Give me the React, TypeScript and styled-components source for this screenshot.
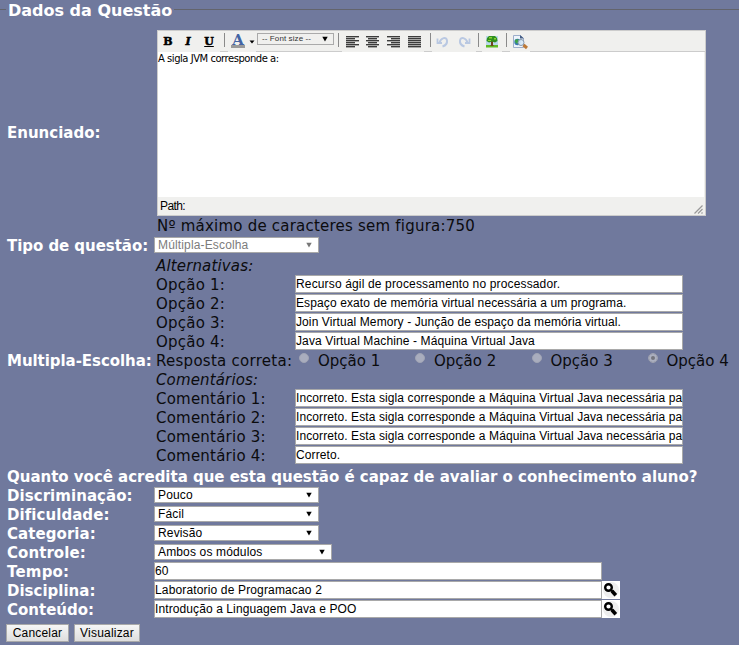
import React from 'react';
import styled, { createGlobalStyle, css } from 'styled-components';

const Global = createGlobalStyle`
  * { box-sizing: border-box; }
  body { margin: 0; background: #70799d; overflow: hidden; }
`;

const Page = styled.main`
  width: 739px;
  height: 645px;
  background: #70799d;
  color: #0b0b0d;
  font: 15px/21px 'DejaVu Sans', sans-serif;
  overflow: hidden;
`;

const Legend = styled.header`
  display: flex;
  height: 30px;
  align-items: flex-start;
`;

const Rule = styled.span<{ $width?: number }>`
  height: 1px;
  margin-top: 9px;
  background: #63646c;
  ${p => (p.$width ? css`width: ${p.$width}px;` : css`flex: 1;`)}
`;

const Title = styled.h1`
  margin: 0;
  width: 168px;
  padding-left: 2px;
  color: #fff;
  font: bold 16px/21px 'DejaVu Sans', sans-serif;
  white-space: nowrap;
`;

const Row = styled.div<{ $height?: number }>`
  display: grid;
  grid-template-columns: 147px 1fr;
  grid-template-rows: 100%;
  align-items: center;
  height: ${p => p.$height ?? 19}px;
  padding-left: 7px;
`;

const Label = styled.span<{ $track?: number }>`
  height: 19px;
  color: #fff;
  font-weight: bold;
  letter-spacing: ${p => p.$track ?? 0}px;
  white-space: nowrap;
`;

const Text = styled.span<{ $track?: number; $italic?: boolean }>`
  height: 19px;
  letter-spacing: ${p => p.$track ?? 0.22}px;
  font-style: ${p => (p.$italic ? 'italic' : 'normal')};
  white-space: nowrap;
`;

const Question = styled.div`
  height: 19px;
  margin-top: 2px;
  padding-left: 7px;
`;

const EditorCell = styled.div`
  align-self: start;
  padding-left: 3px;
`;

const Editor = styled.section`
  display: flex;
  flex-direction: column;
  width: 549px;
  height: 186px;
  border: 1px solid #ccc;
  background: #f0f0ee;
`;

const Toolbar = styled.div`
  display: flex;
  height: 21px;
  box-shadow: inset 0 -1px #ccc;
`;

const Tool = styled.span<{ $width?: number }>`
  display: block;
  width: ${p => p.$width ?? 20}px;
  height: 21px;
  background: #f0f0ee;
  svg { display: block; }
`;

const Divider = styled.span<{ $before: number; $after: number }>`
  width: 1px;
  height: 14px;
  margin: 2px ${p => p.$after}px 0 ${p => p.$before}px;
  background: #8a8a8a;
`;

const Glyph = styled.b<{ $italic?: boolean; $underline?: boolean }>`
  display: block;
  color: #000;
  text-align: center;
  font: bold 11px/22px 'DejaVu Serif', serif;
  font-style: ${p => (p.$italic ? 'italic' : 'normal')};
  text-decoration: ${p => (p.$underline ? 'underline' : 'none')};
  -webkit-text-stroke: 0.5px #000;
`;

const SizeSelect = styled.div`
  display: flex;
  justify-content: space-between;
  width: 77px;
  height: 12px;
  margin: 2px 4px 0 1px;
  padding: 0 5px 0 4px;
  border: 1px solid #aaa;
  font: 8px/10px 'Liberation Sans', sans-serif;
  letter-spacing: 0.1px;
  color: #333;
  svg { margin-top: 2px; }
`;

const Area = styled.div`
  flex: 1;
  width: 546px;
  background: #fff;
  color: #000;
  font: 10px/13px 'DejaVu Sans', sans-serif;
  letter-spacing: -0.47px;
`;

const Status = styled.div`
  display: flex;
  justify-content: space-between;
  align-items: flex-end;
  height: 18px;
  padding-left: 2px;
  color: #000;
  font: 12px/17px 'Liberation Sans', sans-serif;
  letter-spacing: -0.6px;
`;

const SelectBox = styled.div<{ $width?: number; $disabled?: boolean }>`
  display: flex;
  align-items: center;
  justify-content: space-between;
  width: ${p => p.$width ?? 165}px;
  height: 16px;
  margin-top: -1px;
  padding: 0 6px 0 3px;
  border: 1px solid #a9a9a9;
  background: #fff;
  color: ${p => (p.$disabled ? '#7c7c7c' : '#000')};
  font: 12px/14px 'Liberation Sans', sans-serif;
  letter-spacing: 0.15px;
`;

const InputBox = styled.div<{ $width: number; $track?: number }>`
  width: ${p => p.$width}px;
  height: 18px;
  border: 1px solid #a9a9a9;
  background: #fff;
  color: #000;
  font: 12px/16px 'Liberation Sans', sans-serif;
  letter-spacing: ${p => p.$track ?? 0}px;
  white-space: nowrap;
`;

const InputLine = styled.div`
  display: flex;
  height: 19px;
`;

const SubForm = styled.div`
  padding-left: 2px;
`;

const SubRow = styled.div`
  display: grid;
  grid-template-columns: 139px 1fr;
  height: 19px;
`;

const Choices = styled.div`
  display: flex;
`;

const Choice = styled.span<{ $width: number }>`
  display: flex;
  width: ${p => p.$width}px;
`;

const Radio = styled.i<{ $checked: boolean }>`
  flex: none;
  width: 10px;
  height: 10px;
  margin: 2px 9px 0 4px;
  border-radius: 50%;
  border: 1px solid #a0a4b4;
  background: ${p => (p.$checked ? '#74757d' : '#a9adbe')};
  box-shadow: ${p => (p.$checked ? 'inset 0 0 0 2px #acb0c0' : 'none')};
`;

const Search = styled.span`
  width: 18px;
  height: 18px;
  background: #fff;
  svg { display: block; }
`;

const Actions = styled.footer`
  display: flex;
  gap: 5px;
  padding: 5px 0 0 6px;
`;

const Button = styled.button<{ $width: number }>`
  width: ${p => p.$width}px;
  height: 18px;
  padding: 0;
  border: 1px solid #a9a9a9;
  background: linear-gradient(#f6f6f6, #dedede);
  color: #000;
  font: 12px/16px 'Liberation Sans', sans-serif;
  letter-spacing: 0.2px;
`;

const Arrow = ({ color = '#000', size = 6 }: { color?: string; size?: number }) => (
  <svg width={size} height={size} viewBox="0 0 6 6"><path d="M.3 .8h5.4L3 5.500z" fill={color} /></svg>
);

const Align = ({ kind }: { kind: 'left' | 'center' | 'right' | 'full' }) => (
  <svg width="20" height="21">
    {[5, 7, 9, 11, 13, 15].map((y, i) => {
      const w = kind === 'full' || i % 2 === 0 ? 13 : 9;
      const x = kind === 'right' ? 17 - w : kind === 'center' ? 4 + (13 - w) / 2 : 4;
      return <rect key={y} x={x} y={y} width={w} height="1.400" fill="#3c3c3c" />;
    })}
  </svg>
);

const Curl = ({ flip }: { flip?: boolean }) => (
  <svg width="22" height="21" viewBox="0 0 22 21">
    <g transform={flip ? 'translate(21 0) scale(-1 1)' : undefined} fill="none" stroke="#b9c8e2" strokeWidth="2">
      <path d="M7.500 11.500C9 6.500 14.500 5.500 15 9.500c.4 3-1.500 5-4.500 6" />
      <path d="M5.500 7.500v4.500h4.500" strokeWidth="1.800" />
    </g>
  </svg>
);

const Tree = () => (
  <svg width="20" height="21" viewBox="0 0 20 21">
    <rect x="4" y="5" width="12" height="11" fill="#b9d8e9" />
    <path d="M4 14h12v2.500H4z" fill="#5fba25" />
    <path d="M9 10h2v4l1 1H8l1-1z" fill="#70441c" />
    <path d="M4.500 10l.5-3 2-2h6l2 2 .5 3-2.500 1.500-3-1-3 1z" fill="#2f8f1e" />
    <path d="M7 6h3v1.500H7zM12 7h2v1.500h-2zM6 9h3v1H6z" fill="#8ad330" />
  </svg>
);

const Preview = () => (
  <svg width="20" height="21" viewBox="0 0 20 21">
    <path d="M3.500 4.500h7l3 3v9h-10z" fill="#edf4fc" stroke="#9cadcb" />
    <path d="M10 4v3.500h4z" fill="#455d84" />
    <circle cx="7.500" cy="11" r="3.200" fill="#3978b5" />
    <path d="M5 9l3-1 1 2-2 3-2-2z" fill="#3ca449" />
    <circle cx="11" cy="11.500" r="3" fill="#d5eaf9" fillOpacity=".9" stroke="#8798ad" />
    <path d="M13.500 14l3.500 3" stroke="#bd7936" strokeWidth="3" />
  </svg>
);

const TextColor = () => (
  <svg width="29" height="21" viewBox="0 0 29 21">
    <text x="10" y="14" textAnchor="middle" fontFamily="DejaVu Serif, serif" fontWeight="bold" fontSize="15" fill="#4364a4">A</text>
    <rect x="3" y="14" width="14" height="3" fill="#999" />
    <path d="M21.500 9.500h5L24 12.500z" fill="#000" />
  </svg>
);

const Lens = () => (
  <svg width="18" height="18" viewBox="0 0 18 18">
    <circle cx="9" cy="9" r="8" fill="#eee" />
    <circle cx="6.500" cy="6.500" r="3.300" fill="#fff" stroke="#000" strokeWidth="2.400" />
    <path d="M8.800 8.800l2 2" stroke="#000" strokeWidth="2.200" />
    <path d="M10 10l3.800 4.300" stroke="#000" strokeWidth="3.600" />
  </svg>
);

const Grip = () => (
  <svg width="12" height="12" viewBox="0 0 12 12">
    <path d="M1.500 10.500l8-8M5 10.500l4.500-4.500M8.500 10.500l1-1" stroke="#999" fill="none" strokeWidth="1.200" />
  </svg>
);

const options = [
  { text: 'Recurso ágil de processamento no processador.', track: 0.15 },
  { text: 'Espaço exato de memória virtual necessária a um programa.', track: 0.11 },
  { text: 'Join Virtual Memory - Junção de espaço da memória virtual.', track: 0.1 },
  { text: 'Java Virtual Machine - Máquina Virtual Java', track: 0.12 },
];
const wrong = 'Incorreto. Esta sigla corresponde a Máquina Virtual Java necessária pa';
const comments = [wrong, wrong, wrong, 'Correto.'];
const choiceWidths = [116, 116.5, 116, 90];
const selects = [
  { label: 'Discriminação:', value: 'Pouco', width: 165 },
  { label: 'Dificuldade:', value: 'Fácil', width: 165 },
  { label: 'Categoria:', value: 'Revisão', width: 165 },
  { label: 'Controle:', value: 'Ambos os módulos', width: 178 },
];

export default function App() {
  return (
    <Page>
      <Global />
      <Legend><Rule $width={6} /><Title>Dados da Questão</Title><Rule /></Legend>
      <Row $height={205}>
        <Label>Enunciado:</Label>
        <EditorCell>
          <Editor>
            <Toolbar>
              <Tool><Glyph>B</Glyph></Tool>
              <Tool><Glyph $italic>I</Glyph></Tool>
              <Tool $width={22}><Glyph $underline>U</Glyph></Tool>
              <Divider $before={4} $after={3} />
              <Tool $width={28}><TextColor /></Tool>
              <SizeSelect>-- Font size --<Arrow /></SizeSelect>
              <Divider $before={0} $after={3} />
              <Tool><Align kind="left" /></Tool>
              <Tool $width={21}><Align kind="center" /></Tool>
              <Tool $width={21}><Align kind="right" /></Tool>
              <Tool><Align kind="full" /></Tool>
              <Divider $before={6} $after={1} />
              <Tool $width={22}><Curl /></Tool>
              <Tool $width={22}><Curl flip /></Tool>
              <Divider $before={2} $after={3} />
              <Tool><Tree /></Tool>
              <Divider $before={4} $after={3} />
              <Tool><Preview /></Tool>
            </Toolbar>
            <Area>A sigla JVM corresponde a:</Area>
            <Status>Path:<Grip /></Status>
          </Editor>
          <Text>Nº máximo de caracteres sem figura:750</Text>
        </EditorCell>
      </Row>
      <Row $height={21}>
        <Label $track={-0.05}>Tipo de questão:</Label>
        <SelectBox $disabled>Múltipla-Escolha<Arrow color="#777" /></SelectBox>
      </Row>
      <Row $height={209}>
        <Label $track={-0.05}>Multipla-Escolha:</Label>
        <SubForm>
          <Text as="div" $italic $track={0.15}>Alternativas:</Text>
          {options.map((o, i) => (
            <SubRow key={o.text}>
              <Text>Opção {i + 1}:</Text>
              <InputBox $width={388} $track={o.track}>{o.text}</InputBox>
            </SubRow>
          ))}
          <SubRow>
            <Text $track={0.27}>Resposta correta:</Text>
            <Choices>
              {choiceWidths.map((w, i) => (
                <Choice key={i} $width={w}><Radio $checked={i === 3} /><Text $track={0}>Opção {i + 1}</Text></Choice>
              ))}
            </Choices>
          </SubRow>
          <Text as="div" $italic $track={0.15}>Comentários:</Text>
          {comments.map((c, i) => (
            <SubRow key={i}>
              <Text>Comentário {i + 1}:</Text>
              <InputBox $width={388} $track={0.1}>{c}</InputBox>
            </SubRow>
          ))}
        </SubForm>
      </Row>
      <Question><Label $track={-0.015}>Quanto você acredita que esta questão é capaz de avaliar o conhecimento aluno?</Label></Question>
      {selects.map(s => (
        <Row key={s.label}>
          <Label $track={0.06}>{s.label}</Label>
          <SelectBox $width={s.width}>{s.value}<Arrow /></SelectBox>
        </Row>
      ))}
      <Row><Label $track={0.2}>Tempo:</Label><InputLine><InputBox $width={448}>60</InputBox></InputLine></Row>
      <Row><Label>Disciplina:</Label><InputLine><InputBox $width={448} $track={0.15}>Laboratorio de Programacao 2</InputBox><Search><Lens /></Search></InputLine></Row>
      <Row><Label>Conteúdo:</Label><InputLine><InputBox $width={448} $track={0.1}>Introdução a Linguagem Java e POO</InputBox><Search><Lens /></Search></InputLine></Row>
      <Actions><Button $width={63}>Cancelar</Button><Button $width={66}>Visualizar</Button></Actions>
    </Page>
  );
}
